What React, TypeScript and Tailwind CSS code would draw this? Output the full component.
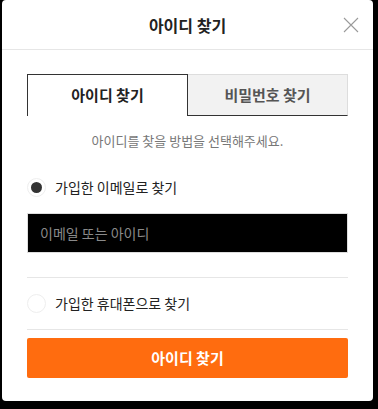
import { useState } from 'react';

const font = { fontFamily: '"Noto Sans CJK KR", "Noto Sans", sans-serif' };

function CloseIcon() {
  return (
    <svg width="16" height="16" viewBox="0 0 16 16" className="text-[#9a9a9a]">
      <path d="M1 1L15 15M15 1L1 15" stroke="currentColor" strokeWidth="1.1" fill="none" />
    </svg>
  );
}

function Radio({ checked, label, onClick }: { checked: boolean; label: string; onClick: () => void }) {
  return (
    <button type="button" onClick={onClick} className="flex h-5 items-center gap-[9px]">
      <span className="flex h-[19px] w-[19px] items-center justify-center rounded-full border border-[#eeeeee] bg-white">
        {checked && <span className="h-[11px] w-[11px] rounded-full bg-[#333333]" />}
      </span>
      <span className="text-[14px] leading-5 text-[#222222]">{label}</span>
    </button>
  );
}

export default function App() {
  const [tab, setTab] = useState<'id' | 'pw'>('id');
  const [method, setMethod] = useState<'email' | 'phone'>('email');

  return (
    <div className="min-h-[409px] w-[378px] bg-black" style={font}>
      <div className="ml-[2px] flex h-[401px] w-[371px] flex-col rounded-[4px] bg-white">
        <div className="relative flex h-[50px] items-center justify-center border-b border-[#e6e6e6]">
          <h1 className="text-[16px] font-bold text-[#222222]">아이디 찾기</h1>
          <button type="button" className="absolute right-[14px] top-[17px]">
            <CloseIcon />
          </button>
        </div>

        <div className="flex flex-col px-[25px] pt-[24px]">
          <div className="flex h-[42px]">
            <button
              type="button"
              onClick={() => setTab('id')}
              className="flex-1 border border-b-0 border-[#333333] bg-white text-[15px] font-bold text-[#222222]"
            >
              아이디 찾기
            </button>
            <button
              type="button"
              onClick={() => setTab('pw')}
              className="flex-1 border-t border-r border-b border-t-[#dddddd] border-r-[#dddddd] border-b-[#333333] bg-[#f2f2f2] text-[15px] font-bold text-[#555555]"
            >
              비밀번호 찾기
            </button>
          </div>

          <p className="mt-[15px] text-center text-[13px] leading-5 text-[#777777]">
            아이디를 찾을 방법을 선택해주세요.
          </p>

          <div className="mt-[26px]">
            <Radio checked={method === 'email'} label="가입한 이메일로 찾기" onClick={() => setMethod('email')} />
          </div>

          <input
            placeholder="이메일 또는 아이디"
            className="mt-[16px] h-[40px] w-full border border-[#dddddd] bg-black px-[12px] text-[14px] text-white outline-none placeholder:text-[#8a8a8a]"
          />

          <div className="mt-[24px] border-t border-[#e6e6e6]" />

          <div className="mt-[15px]">
            <Radio checked={method === 'phone'} label="가입한 휴대폰으로 찾기" onClick={() => setMethod('phone')} />
          </div>

          <div className="mt-[16px] border-t border-[#e6e6e6]" />

          <button
            type="button"
            className="mt-[8px] h-[40px] w-full rounded-[2px] bg-[#ff6c0f] text-[15px] font-bold text-white"
          >
            아이디 찾기
          </button>
        </div>
      </div>
      {tab === 'pw' && null}
    </div>
  );
}
